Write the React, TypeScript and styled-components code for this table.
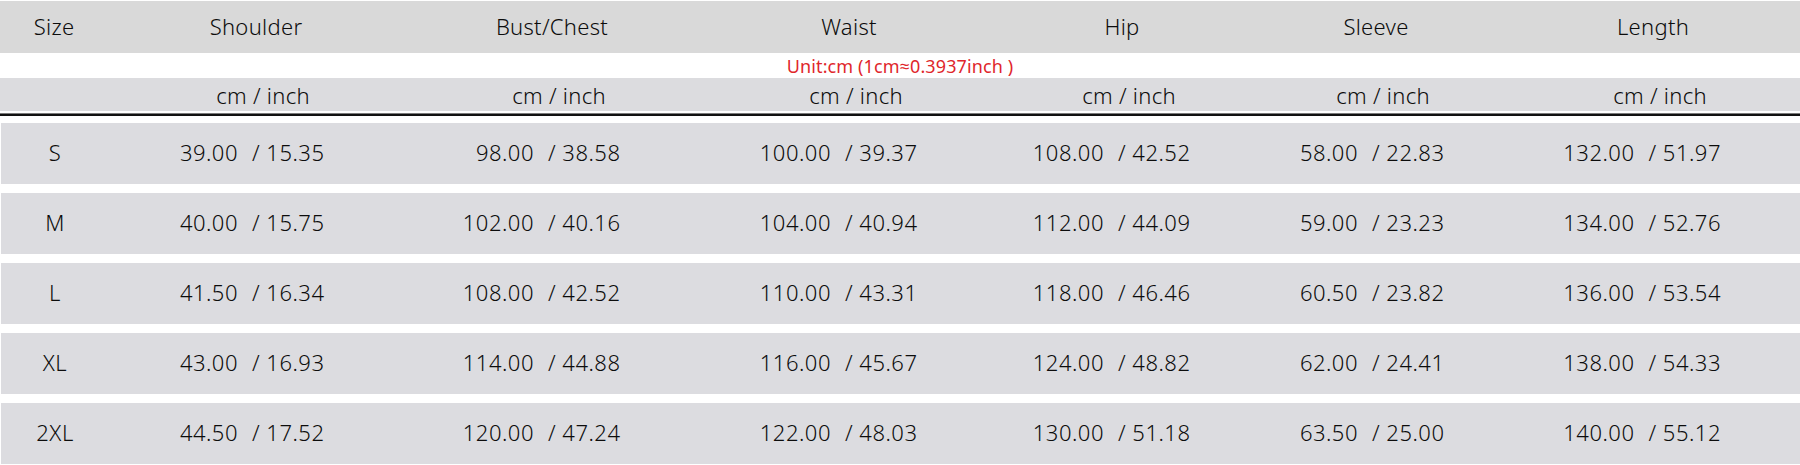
import React from 'react';
import styled, { createGlobalStyle } from 'styled-components';

const GlobalStyle = createGlobalStyle`
  html, body {
    margin: 0;
    padding: 0;
    background: #ffffff;
  }
  body {
    font-family: "Noto Sans", "Open Sans", sans-serif;
    font-weight: 350;
    color: #0c0c0c;
  }
`;

const COLS = '108px 296px 296px 298px 248px 260px 1fr';

const Page = styled.div`
  width: 1800px;
  display: flex;
  flex-direction: column;
`;

const HeaderBand = styled.div`
  display: grid;
  grid-template-columns: ${COLS};
  align-items: center;
  height: 52px;
  margin-top: 1px;
  background: #d9d9d9;
`;

const HeadCell = styled.div`
  text-align: center;
  font-size: 22px;
  line-height: 1;
  padding-bottom: 3px;
  letter-spacing: 0.3px;
`;

const UnitNote = styled.div`
  height: 25px;
  display: flex;
  align-items: center;
  justify-content: center;
  color: #e0262b;
  font-size: 18px;
  font-weight: 400;
  letter-spacing: 0.1px;
`;

const UnitBand = styled.div`
  display: grid;
  grid-template-columns: ${COLS};
  align-items: center;
  height: 33px;
  background: #dcdcdf;
`;

const UnitCell = styled.div`
  text-align: center;
  font-size: 22px;
  line-height: 1;
  padding-left: 14px;
  letter-spacing: 0.3px;
`;

const Divider = styled.div`
  margin-top: 2px;
  height: 0;
  border-top: 1px solid #7a7a7a;
  border-bottom: 2px solid #111111;
`;

const Body = styled.div`
  display: flex;
  flex-direction: column;
  gap: 9px;
  padding-top: 7px;
`;

const Row = styled.div`
  display: grid;
  grid-template-columns: ${COLS};
  align-items: center;
  height: 61px;
  margin-left: 1px;
  padding-bottom: 3px;
  box-sizing: border-box;
  background: #dcdce0;
  font-size: 22px;
  letter-spacing: 0.5px;
`;

const SizeCell = styled.div`
  text-align: center;
`;

const ValueCell = styled.div`
  display: grid;
  grid-template-columns: 1fr 1fr;
  white-space: pre;
`;

const CmPart = styled.span`
  text-align: right;
  padding-right: 19px;
`;

const InchPart = styled.span`
  text-align: left;
  margin-left: -5px;
`;

const headers = ['Size', 'Shoulder', 'Bust/Chest', 'Waist', 'Hip', 'Sleeve', 'Length'];

const rows: { size: string; values: [string, string][] }[] = [
  {
    size: 'S',
    values: [['39.00', '15.35'], ['98.00', '38.58'], ['100.00', '39.37'], ['108.00', '42.52'], ['58.00', '22.83'], ['132.00', '51.97']],
  },
  {
    size: 'M',
    values: [['40.00', '15.75'], ['102.00', '40.16'], ['104.00', '40.94'], ['112.00', '44.09'], ['59.00', '23.23'], ['134.00', '52.76']],
  },
  {
    size: 'L',
    values: [['41.50', '16.34'], ['108.00', '42.52'], ['110.00', '43.31'], ['118.00', '46.46'], ['60.50', '23.82'], ['136.00', '53.54']],
  },
  {
    size: 'XL',
    values: [['43.00', '16.93'], ['114.00', '44.88'], ['116.00', '45.67'], ['124.00', '48.82'], ['62.00', '24.41'], ['138.00', '54.33']],
  },
  {
    size: '2XL',
    values: [['44.50', '17.52'], ['120.00', '47.24'], ['122.00', '48.03'], ['130.00', '51.18'], ['63.50', '25.00'], ['140.00', '55.12']],
  },
];

const App: React.FC = () => {
  return (
    <>
      <GlobalStyle />
      <Page>
        <HeaderBand>
          {headers.map((h) => (
            <HeadCell key={h}>{h}</HeadCell>
          ))}
        </HeaderBand>
        <UnitNote>Unit:cm (1cm≈0.3937inch )</UnitNote>
        <UnitBand>
          <UnitCell />
          {headers.slice(1).map((h) => (
            <UnitCell key={h}>cm / inch</UnitCell>
          ))}
        </UnitBand>
        <Divider />
        <Body>
          {rows.map((r) => (
            <Row key={r.size}>
              <SizeCell>{r.size}</SizeCell>
              {r.values.map(([cm, inch], i) => (
                <ValueCell key={i}>
                  <CmPart>{cm}</CmPart>
                  <InchPart>/ {inch}</InchPart>
                </ValueCell>
              ))}
            </Row>
          ))}
        </Body>
      </Page>
    </>
  );
};

export default App;
